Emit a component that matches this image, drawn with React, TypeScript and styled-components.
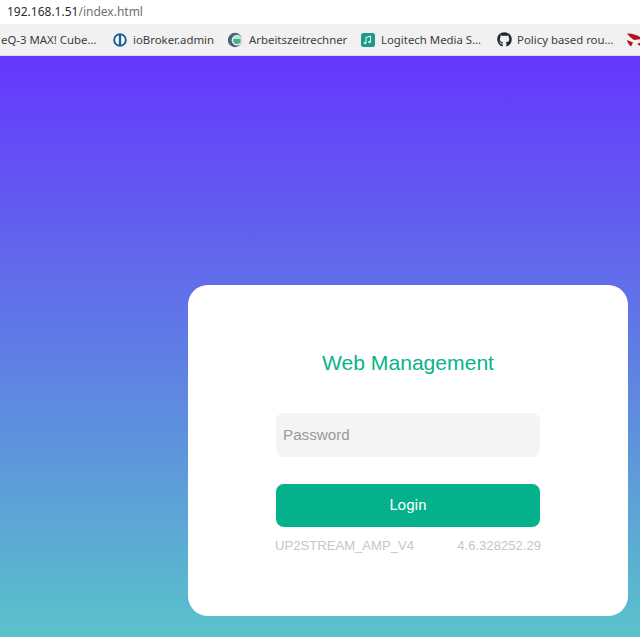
import React from "react";
import styled, { createGlobalStyle } from "styled-components";
import { FaGithub } from "react-icons/fa";

const Global = createGlobalStyle`
  html, body { margin: 0; padding: 0; height: 100%; overflow: hidden; background: #fff; }
  #root { height: 100%; }
  * { box-sizing: border-box; }
`;

const Page = styled.div`
  width: 640px;
  height: 637px;
  display: flex;
  flex-direction: column;
  overflow: hidden;
`;

const AddressBar = styled.div`
  height: 24px;
  padding: 0 0 2px 7px;
  display: flex;
  align-items: center;
  background: #fff;
  font: 12px "Noto Sans", sans-serif;
  color: #6f7073;
  white-space: nowrap;
`;

const Host = styled.span`
  color: #2b2c2e;
`;

const Bookmarks = styled.div`
  height: 32px;
  display: flex;
  align-items: center;
  background: #f1f1f2;
  border-bottom: 1px solid #d9d9da;
  overflow: hidden;
  white-space: nowrap;
`;

const Bookmark = styled.div<{ $width: number; $gap?: number }>`
  flex: 0 0 ${(p) => p.$width}px;
  display: flex;
  align-items: center;
  gap: ${(p) => p.$gap ?? 5}px;
  font: 11.4px "Noto Sans", sans-serif;
  color: #3b3c3f;
  padding-left: ${(p) => (p.$gap === 0 ? 1 : 0)}px;
`;

const IconSlot = styled.span`
  width: 16px;
  height: 16px;
  flex: none;
  display: inline-flex;
  align-items: center;
  justify-content: center;
  color: #24292e;
`;

const Stage = styled.main`
  flex: 1;
  background: linear-gradient(180deg, #6537fe 0%, #5ac2cb 100%);
  padding: 229px 12px 21px 188px;
  display: flex;
`;

const Card = styled.section`
  width: 440px;
  height: 331px;
  background: #fff;
  border-radius: 20px;
  padding: 63px 88px 0;
  display: flex;
  flex-direction: column;
`;

const Title = styled.h1`
  margin: 0;
  height: 30px;
  font: 400 21.1px/30px "Liberation Sans", Arial, sans-serif;
  color: #09b38a;
  text-align: center;
`;

const PasswordInput = styled.input`
  margin-top: 35px;
  height: 44px;
  width: 264px;
  border: 0;
  outline: 0;
  border-radius: 8px;
  background: #f4f4f4;
  padding: 0 7px 2px;
  font: 15.2px "Liberation Sans", Arial, sans-serif;
  &::placeholder { color: #999; opacity: 1; }
`;

const LoginButton = styled.button`
  margin-top: 27px;
  height: 43px;
  width: 264px;
  border: 0;
  padding: 0 0 2px;
  border-radius: 8px;
  background: #04b18b;
  color: #fff;
  font: 15px "Roboto", "Liberation Sans", sans-serif;
`;

const Footer = styled.div`
  margin: 10px -1px 0;
  display: flex;
  justify-content: space-between;
  font: 13.1px/18px "Liberation Sans", Arial, sans-serif;
  color: #c6c6c6;
`;

const IoBrokerIcon = () => (
  <svg width="14" height="14" viewBox="0 0 14 14">
    <circle cx="7" cy="7" r="5.8" fill="#fff" stroke="#1e5f99" strokeWidth="2" />
    <rect x="5.8" y="1" width="2.4" height="12" fill="#1e5f99" />
  </svg>
);

const ArbeitIcon = () => (
  <svg width="16" height="16" viewBox="0 0 16 16">
    <circle cx="8" cy="8" r="7.2" fill="#47607f" />
    <circle cx="10" cy="8.2" r="5.4" fill="#e4ecea" />
    <path d="M6.2 8.2a3.8 3.8 0 0 1 7.6 0a3.8 3.8 0 0 1-7.6 0z" fill="#3fb27f" />
    <path d="M6.2 7a3.8 3.8 0 0 1 7.6 0z" fill="#bfe3d2" />
  </svg>
);

const LogitechIcon = () => (
  <svg width="14" height="14" viewBox="0 0 14 14">
    <rect width="14" height="14" rx="2.5" fill="#1c9a8a" />
    <path d="M5 10V4.5l4.5-1.2V9" fill="none" stroke="#d5efe9" strokeWidth="1.1" />
    <circle cx="4" cy="10" r="1.3" fill="#d5efe9" />
    <circle cx="8.5" cy="9" r="1.3" fill="#d5efe9" />
  </svg>
);

const RedIcon = () => (
  <svg width="16" height="16" viewBox="0 0 16 16">
    <path d="M0 1.5C5 1 11 3 16 7l-9 1C4 6 2 4 0 1.5z" fill="#b5121f" />
    <path d="M0 8l6 2.5L4 14.5C2 13 0.5 11 0 8z" fill="#b5121f" />
    <path d="M10 12l5-2v5z" fill="#b5121f" />
  </svg>
);

export default function App() {
  return (
    <Page>
      <Global />
      <AddressBar>
        <Host>192.168.1.51</Host>/index.html
      </AddressBar>
      <Bookmarks>
        <Bookmark $width={112} $gap={0}>eQ-3 MAX! Cube…</Bookmark>
        <Bookmark $width={115}><IconSlot><IoBrokerIcon /></IconSlot>ioBroker.admin</Bookmark>
        <Bookmark $width={133} $gap={6}><IconSlot><ArbeitIcon /></IconSlot>Arbeitszeitrechner</Bookmark>
        <Bookmark $width={136}><IconSlot><LogitechIcon /></IconSlot>Logitech Media S…</Bookmark>
        <Bookmark $width={131}><IconSlot><FaGithub size={15} /></IconSlot>Policy based rou…</Bookmark>
        <Bookmark $width={16}><IconSlot><RedIcon /></IconSlot></Bookmark>
      </Bookmarks>
      <Stage>
        <Card>
          <Title>Web Management</Title>
          <PasswordInput type="password" placeholder="Password" />
          <LoginButton>Login</LoginButton>
          <Footer>
            <span>UP2STREAM_AMP_V4</span>
            <span>4.6.328252.29</span>
          </Footer>
        </Card>
      </Stage>
    </Page>
  );
}
